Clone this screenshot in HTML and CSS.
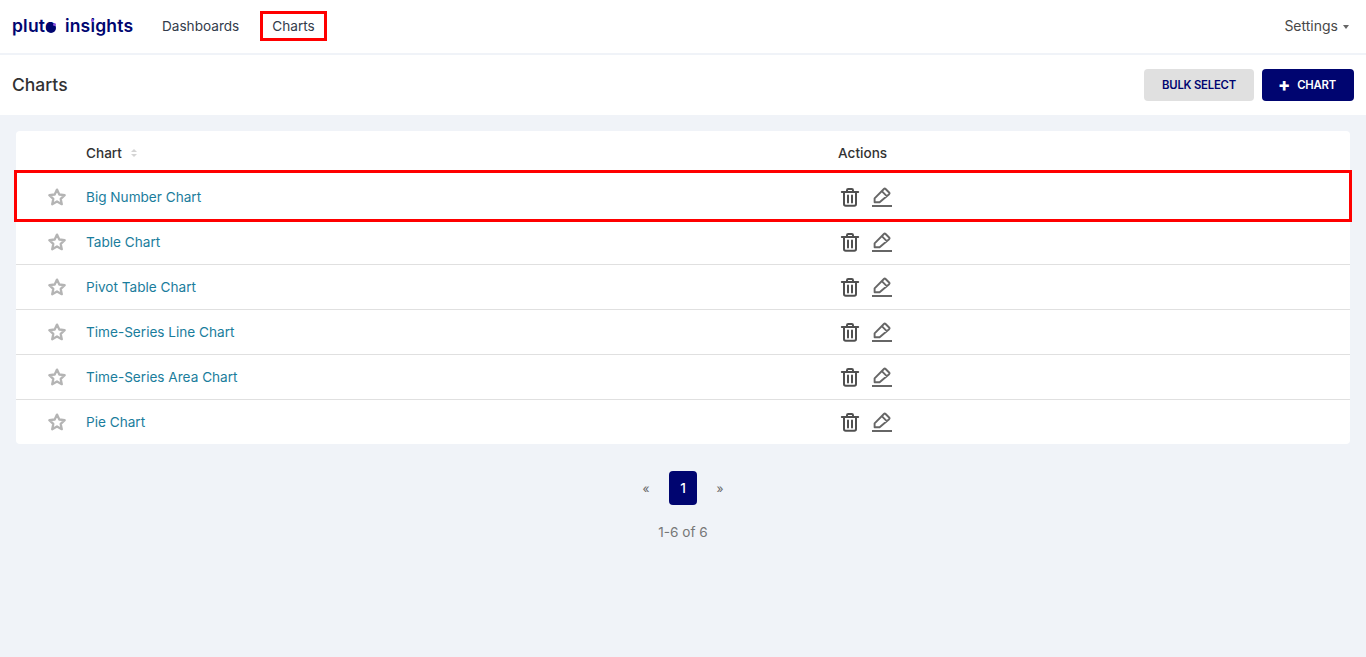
FILE: index.html
```html
<!DOCTYPE html>
<html lang="en">
<head>
<meta charset="utf-8">
<title>Charts</title>
<link rel="stylesheet" href="styles.css">
</head>
<body>
<svg class="sprites" width="0" height="0" aria-hidden="true">
  <symbol id="star" viewBox="0 0 20 20"><path d="M10 2.6l2.3 4.9 5.4.7-4 3.7 1.1 5.3-4.8-2.7-4.8 2.7 1.1-5.3-4-3.7 5.4-.7z" fill="none" stroke="currentColor" stroke-width="2.3" stroke-linejoin="round"/></symbol>
  <symbol id="trash" viewBox="0 0 20 20"><path d="M1.8 5h16.4M7 5V3.2C7 2.5 7.5 2 8.2 2h3.6c.7 0 1.2.5 1.2 1.2V5M4 5v12c0 1 .7 1.7 1.7 1.7h8.6c1 0 1.7-.7 1.7-1.7V5M8 8.5v7M12 8.5v7" fill="none" stroke="currentColor" stroke-width="2" stroke-linecap="round"/></symbol>
  <symbol id="edit" viewBox="0 0 22 20"><path d="M3.6 15.2v-3.9L12.9 2c.5-.5 1.2-.5 1.7 0l3.5 3.5c.5.5.5 1.2 0 1.7L8.6 15.2zM10.8 4.2l5.2 5.2" fill="none" stroke="currentColor" stroke-width="1.9" stroke-linejoin="round"/><path d="M1 19h20" stroke="currentColor" stroke-width="2"/></symbol>
</svg>
<header class="navbar">
  <a class="logo">pluto<span class="logo-gap"></span>insights<span class="logo-dot"></span><span class="logo-i"></span></a>
  <nav class="nav">
    <a class="nav-link">Dashboards</a>
    <a class="nav-link nav-marked">Charts</a>
  </nav>
  <a class="settings">Settings<span class="caret"></span></a>
</header>
<section class="subheader">
  <h1 class="title">Charts</h1>
  <div class="buttons">
    <button class="btn btn-grey">BULK SELECT</button>
    <button class="btn btn-navy"><span class="plus">+</span>CHART</button>
  </div>
</section>
<main class="main">
  <div class="card">
    <div class="row head">
      <div class="col-star"></div>
      <div class="col-name">Chart<span class="sort"><i></i><i></i></span></div>
      <div class="col-actions">Actions</div>
    </div>
    <div class="row body marked">
      <div class="col-star"><svg class="ic-star"><use href="#star"/></svg></div>
      <a class="col-name link">Big Number Chart</a>
      <div class="col-actions"><svg class="ic-trash"><use href="#trash"/></svg><svg class="ic-edit"><use href="#edit"/></svg></div>
    </div>
    <div class="row body">
      <div class="col-star"><svg class="ic-star"><use href="#star"/></svg></div>
      <a class="col-name link">Table Chart</a>
      <div class="col-actions"><svg class="ic-trash"><use href="#trash"/></svg><svg class="ic-edit"><use href="#edit"/></svg></div>
    </div>
    <div class="row body">
      <div class="col-star"><svg class="ic-star"><use href="#star"/></svg></div>
      <a class="col-name link">Pivot Table Chart</a>
      <div class="col-actions"><svg class="ic-trash"><use href="#trash"/></svg><svg class="ic-edit"><use href="#edit"/></svg></div>
    </div>
    <div class="row body">
      <div class="col-star"><svg class="ic-star"><use href="#star"/></svg></div>
      <a class="col-name link">Time-Series Line Chart</a>
      <div class="col-actions"><svg class="ic-trash"><use href="#trash"/></svg><svg class="ic-edit"><use href="#edit"/></svg></div>
    </div>
    <div class="row body">
      <div class="col-star"><svg class="ic-star"><use href="#star"/></svg></div>
      <a class="col-name link">Time-Series Area Chart</a>
      <div class="col-actions"><svg class="ic-trash"><use href="#trash"/></svg><svg class="ic-edit"><use href="#edit"/></svg></div>
    </div>
    <div class="row body">
      <div class="col-star"><svg class="ic-star"><use href="#star"/></svg></div>
      <a class="col-name link">Pie Chart</a>
      <div class="col-actions"><svg class="ic-trash"><use href="#trash"/></svg><svg class="ic-edit"><use href="#edit"/></svg></div>
    </div>
  </div>
  <div class="pager">
    <a class="page-arrow">«</a>
    <a class="page-num">1</a>
    <a class="page-arrow">»</a>
  </div>
  <div class="count">1-6 of 6</div>
</main>
</body>
</html>
```

FILE: styles.css
```css
* { box-sizing: border-box; }
html, body { height: 100%; }
body {
  margin: 0;
  display: flex;
  flex-direction: column;
  background: #f0f3f8;
  color: #323232;
  font-family: "Inter", "Liberation Sans", sans-serif;
  font-size: 14px;
}
.sprites { display: block; height: 0; }
.navbar {
  height: 55px;
  flex: none;
  display: flex;
  align-items: center;
  padding: 0 17px 2px 12px;
  background: #fff;
  border-bottom: 2px solid #f0f3f8;
}
.logo {
  position: relative;
  display: flex;
  width: 150px;
  color: #000570;
  font-size: 17.5px;
  font-weight: 600;
  letter-spacing: 0.2px;
}
.logo-gap { width: 9px; }
.logo-dot {
  position: absolute;
  left: 34px;
  top: 8px;
  width: 10px;
  height: 10px;
  border-radius: 50%;
  background: #000570;
}
.logo-dot::after {
  content: "";
  position: absolute;
  right: 0;
  top: 0;
  width: 3px;
  height: 3px;
  border-radius: 50%;
  background: #8a4fe0;
}
.logo-i {
  position: absolute;
  left: 79px;
  top: 4px;
  width: 3px;
  height: 3px;
  border-radius: 50%;
  background: #8a4fe0;
}
.nav { display: flex; align-items: center; gap: 24px; }
.nav-link { color: #323b4b; font-size: 13.6px; line-height: 24px; }
.nav-marked { padding: 0 9px; outline: 3px solid #f00; }
.settings { margin-left: auto; display: flex; align-items: center; font-size: 14px; color: #484848; }
.caret {
  margin-left: 5px;
  margin-top: 2px;
  border-left: 3.5px solid transparent;
  border-right: 3.5px solid transparent;
  border-top: 4px solid #666;
}
.subheader {
  height: 60px;
  flex: none;
  display: flex;
  align-items: center;
  justify-content: space-between;
  padding: 0 12px;
  background: #fff;
}
.title { margin: 0 0 1px; font-size: 17.5px; font-weight: 500; line-height: 22px; color: #323232; }
.buttons { display: flex; gap: 8px; }
.btn {
  height: 32px;
  border: 0;
  border-radius: 4px;
  font-family: inherit;
  font-size: 11.3px;
  font-weight: 600;
  letter-spacing: -0.2px;
  display: flex;
  align-items: center;
  justify-content: center;
}
.btn-grey { width: 110px; background: #e0e0e0; color: #000570; }
.btn-navy { width: 92px; padding-left: 4px; background: #000570; color: #fff; }
.plus { font-size: 18px; margin-right: 7px; line-height: 1; font-weight: 800; }
.main { flex: 1; padding: 16px 16px 0; }
.card { background: #fff; border-radius: 4px; }
.row { display: flex; align-items: center; }
.head { height: 44px; font-weight: 500; color: #323232; font-size: 13.6px; }
.body { height: 45px; border-top: 1px solid #e0e0e0; }
.marked { position: relative; height: 44px; border-top: 0; }
.marked::after {
  content: "";
  position: absolute;
  inset: -5px -2px -3px;
  border: 3px solid #f00;
  pointer-events: none;
}
.col-star { width: 70px; display: flex; justify-content: flex-end; padding-right: 19px; }
.col-name { width: 752px; display: flex; align-items: center; }
.col-actions { display: flex; align-items: center; gap: 11px; }
.link { color: #1a7d9c; font-size: 13.6px; }
.sort { display: inline-flex; flex-direction: column; gap: 2px; margin-left: 9px; }
.sort i { border-left: 3.5px solid transparent; border-right: 3.5px solid transparent; }
.sort i:first-child { border-bottom: 3px solid #d4d4d4; }
.sort i:last-child { border-top: 3px solid #d4d4d4; }
.ic-star { width: 20px; height: 20px; color: #b4b4b4; }
.ic-trash { width: 20px; height: 20px; color: #505050; margin-left: 2px; }
.ic-edit { width: 22px; height: 20px; color: #666; }
.pager {
  margin-top: 27px;
  display: flex;
  justify-content: center;
  align-items: center;
  gap: 16px;
  height: 34px;
}
.page-arrow { width: 8px; text-align: center; font-size: 12px; color: #666; }
.page-num {
  width: 28px;
  height: 34px;
  margin: 0 3px;
  border-radius: 4px;
  background: #000570;
  color: #fff;
  font-size: 13.6px;
  font-weight: 500;
  display: flex;
  align-items: center;
  justify-content: center;
}
.count { margin-top: 19px; text-align: center; font-size: 13.6px; color: #777; }
```
